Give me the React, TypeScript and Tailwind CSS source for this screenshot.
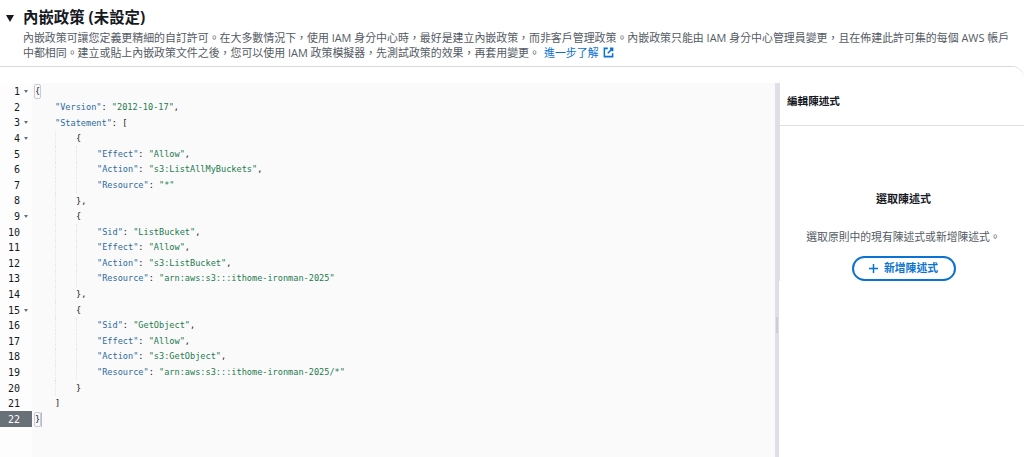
const sans = "font-['Open_Sans','Noto_Sans_CJK_TC',sans-serif]";

// 每行: 縮排層級, 內容 tokens
type Tok = { t: string; c?: 'k' | 's' };
const k = (t: string): Tok => ({ t, c: 'k' });
const s = (t: string): Tok => ({ t, c: 's' });
const p = (t: string): Tok => ({ t });

const lines: { n: number; fold?: boolean; indent: number; toks: Tok[] }[] = [
  { n: 1, fold: true, indent: 0, toks: [p('{')] },
  { n: 2, indent: 1, toks: [k('"Version"'), p(': '), s('"2012-10-17"'), p(',')] },
  { n: 3, fold: true, indent: 1, toks: [k('"Statement"'), p(': [')] },
  { n: 4, fold: true, indent: 2, toks: [p('{')] },
  { n: 5, indent: 3, toks: [k('"Effect"'), p(': '), s('"Allow"'), p(',')] },
  { n: 6, indent: 3, toks: [k('"Action"'), p(': '), s('"s3:ListAllMyBuckets"'), p(',')] },
  { n: 7, indent: 3, toks: [k('"Resource"'), p(': '), s('"*"')] },
  { n: 8, indent: 2, toks: [p('},')] },
  { n: 9, fold: true, indent: 2, toks: [p('{')] },
  { n: 10, indent: 3, toks: [k('"Sid"'), p(': '), s('"ListBucket"'), p(',')] },
  { n: 11, indent: 3, toks: [k('"Effect"'), p(': '), s('"Allow"'), p(',')] },
  { n: 12, indent: 3, toks: [k('"Action"'), p(': '), s('"s3:ListBucket"'), p(',')] },
  { n: 13, indent: 3, toks: [k('"Resource"'), p(': '), s('"arn:aws:s3:::ithome-ironman-2025"')] },
  { n: 14, indent: 2, toks: [p('},')] },
  { n: 15, fold: true, indent: 2, toks: [p('{')] },
  { n: 16, indent: 3, toks: [k('"Sid"'), p(': '), s('"GetObject"'), p(',')] },
  { n: 17, indent: 3, toks: [k('"Effect"'), p(': '), s('"Allow"'), p(',')] },
  { n: 18, indent: 3, toks: [k('"Action"'), p(': '), s('"s3:GetObject"'), p(',')] },
  { n: 19, indent: 3, toks: [k('"Resource"'), p(': '), s('"arn:aws:s3:::ithome-ironman-2025/*"')] },
  { n: 20, indent: 2, toks: [p('}')] },
  { n: 21, indent: 1, toks: [p(']')] },
  { n: 22, indent: 0, toks: [p('}')] },
];

function CodeLine({ line }: { line: (typeof lines)[number] }) {
  const active = line.n === 22;
  const matched = line.n === 1 || active;
  return (
    <div className="flex h-[15.6px] items-center">
      <div className={`flex h-full w-[32px] shrink-0 items-center justify-between pl-[4px] pr-[4px] text-[10px] ${active ? 'bg-[#687078] text-white' : 'bg-[#fdfdfd] text-[#16191f]'}`}>
        <span className="w-[16px] text-right">{line.n}</span>
        {line.fold ? <span className="h-0 w-0 border-x-[2.5px] border-t-[3px] border-x-transparent border-t-[#687078]" /> : <span />}
      </div>
      <div className="flex h-full items-center pl-[2px]">
        {Array.from({ length: line.indent }).map((_, i) => (
          // 第一層不畫縮排線
          <span key={i} className={`h-full w-[21px] ${i > 0 ? 'border-l border-dotted border-[#e3e5e5]' : ''}`} />
        ))}
        <span className={matched ? 'inline-flex h-[15px] items-center rounded-[2px] border border-[#c9ccd8]' : ''}>
          {line.toks.map((tok, i) => (
            <span key={i} className={tok.c === 'k' ? 'text-[#2e6b9e]' : tok.c === 's' ? 'text-[#1d7a4f]' : 'text-[#16191f]'}>{tok.t}</span>
          ))}
        </span>
        {active && <span className="h-[15px] w-[1px] bg-[#b8bcc4]" />}
      </div>
    </div>
  );
}

export default function App() {
  return (
    <div className={`flex h-[457px] w-[1024px] flex-col overflow-hidden bg-white ${sans}`}>
      {/* 標題 */}
      <div className="flex h-[66px] shrink-0 items-start pl-[6px] pt-[9px]">
        <span className="mr-[9px] mt-[6px] h-0 w-0 border-x-[4.5px] border-t-[7px] border-x-transparent border-t-[#16191f]" />
        <div className="min-w-0 flex-1">
          <h2 className="text-[15.4px] font-bold leading-[18px] text-[#16191f]">內嵌政策 (未設定)</h2>
          <p className="mt-[2.5px] w-[990px] text-[10.93px] leading-[15.4px] text-[#545b64]">
            內嵌政策可讓您定義更精細的自訂許可。在大多數情況下，使用 IAM 身分中心時，最好是建立內嵌政策，而非客戶管理政策。內嵌政策只能由 IAM 身分中心管理員變更，且在佈建此許可集的每個 AWS 帳戶中都相同。建立或貼上內嵌政策文件之後，您可以使用 IAM 政策模擬器，先測試政策的效果，再套用變更。
            <a className="ml-[4px] text-[#0972d3]">進一步了解</a>
            <svg className="ml-[4px] inline-block align-[-1px]" width="11" height="11" viewBox="0 0 16 16" fill="none" stroke="#0972d3" strokeWidth="2.2">
              <path d="M7 2H2v12h12V9M10 2h4v4M14 2L7 9" />
            </svg>
          </p>
        </div>
      </div>

      <div className="flex min-h-0 flex-1 flex-col rounded-tr-[12px] border-t border-[#d5dbdb] pt-[16px]">
        <div className="flex min-h-0 flex-1">
          {/* 編輯器 */}
          <div className="w-[775px] shrink-0 bg-[linear-gradient(to_right,#fdfdfd_32px,#fafafa_32px)] pt-[1px] font-['DejaVu_Sans_Mono',monospace] text-[8.58px]">
            {lines.map(line => <CodeLine key={line.n} line={line} />)}
          </div>
          <div className="relative w-[4px] shrink-0 bg-[#dfe0e5]">
            <span className="absolute left-[4px] top-0 h-[198px] w-[1px] bg-[#dfe0e5]" />
            <span className="absolute left-[1px] top-[234px] h-[16px] w-[2px] bg-[#cdced4]" />
          </div>
          {/* 陳述式面板 */}
          <div className="flex min-w-0 flex-1 flex-col">
            <div className="ml-[1px] flex h-[43px] shrink-0 items-center border-b border-[#dfe0e5] pl-[7px] pb-[5px] text-[10.6px] font-bold text-[#16191f]">編輯陳述式</div>
            <div className="flex flex-col items-center pl-[4px] pt-[66px]">
              <h3 className="text-[11px] font-bold leading-[14px] text-[#16191f]">選取陳述式</h3>
              <p className="mt-[24px] text-[10.8px] leading-[14px] text-[#545b64]">選取原則中的現有陳述式或新增陳述式。</p>
              <button className="mt-[12px] flex h-[24.5px] w-[104px] items-center justify-center gap-[6px] rounded-full border-2 border-[#0972d3] text-[10.8px] font-bold text-[#0972d3]">
                <svg width="9" height="9" viewBox="0 0 9 9" stroke="#0972d3" strokeWidth="1.5"><path d="M4.5 0v9M0 4.5h9" /></svg>
                新增陳述式
              </button>
            </div>
          </div>
        </div>
      </div>
    </div>
  );
}
